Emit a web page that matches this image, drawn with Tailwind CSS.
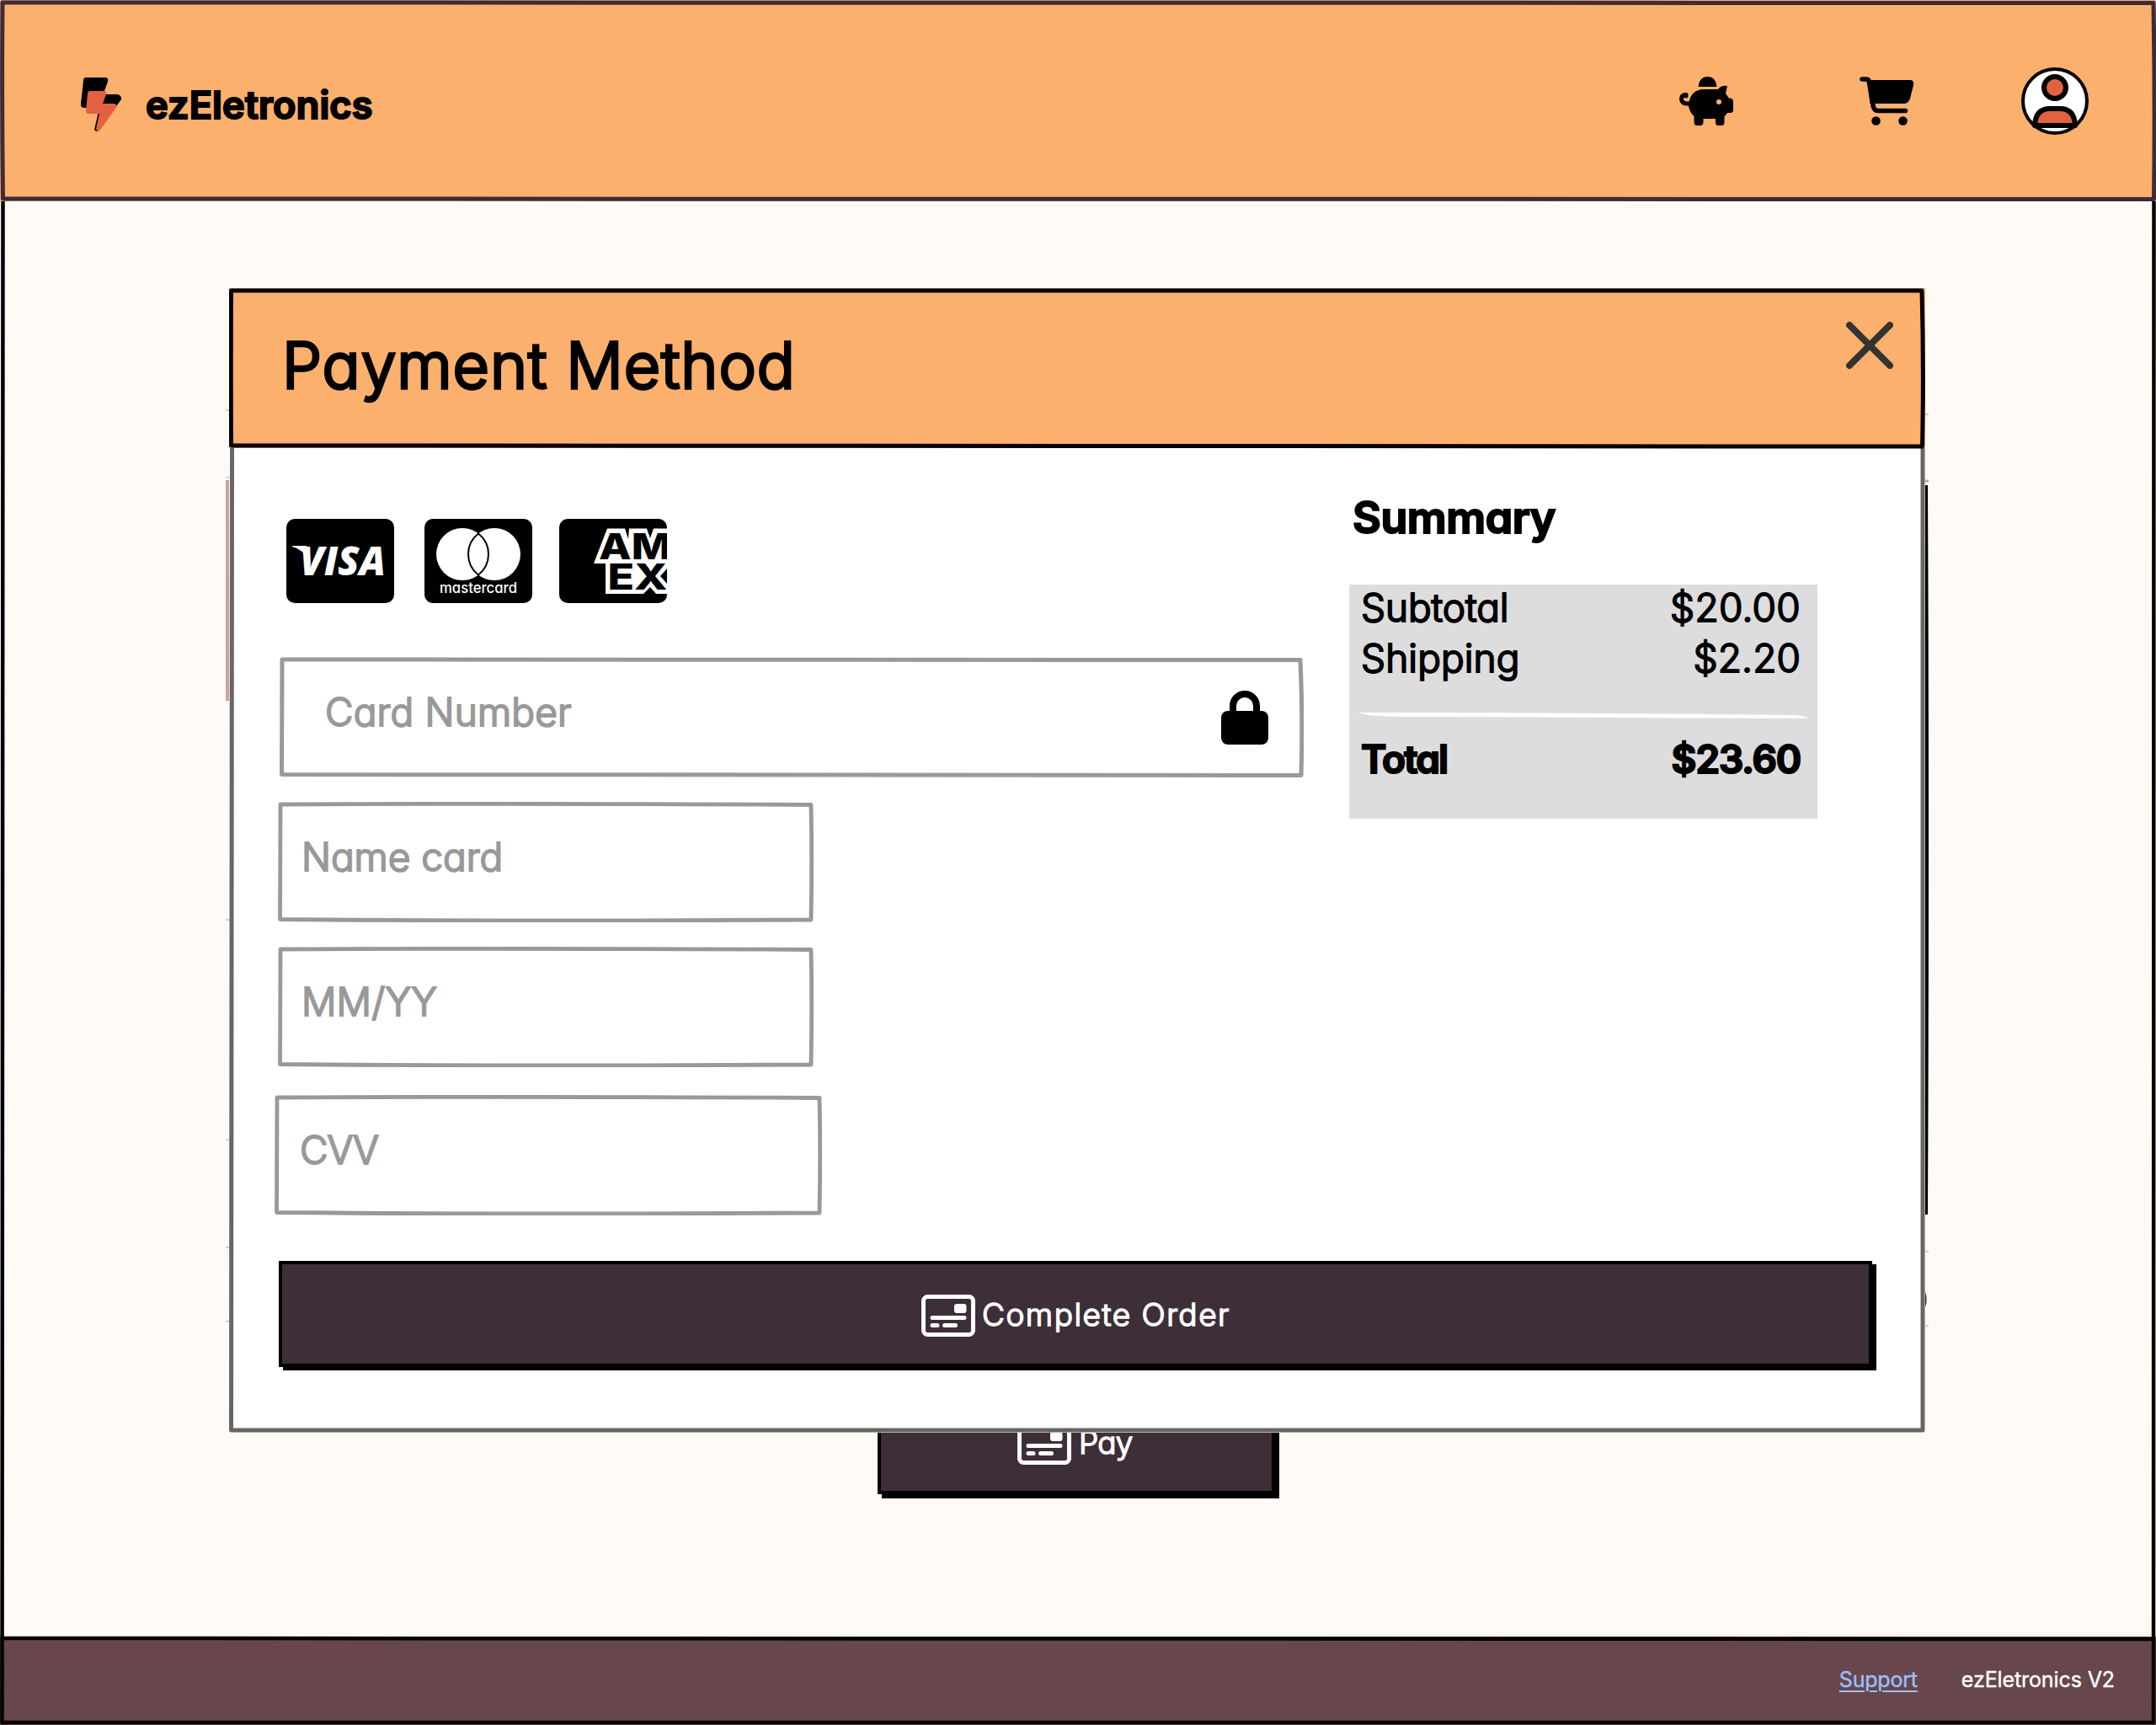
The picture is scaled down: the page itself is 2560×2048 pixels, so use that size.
<!DOCTYPE html>
<html lang="en">
<head>
<meta charset="utf-8">
<title>ezEletronics</title>
<script src="https://cdn.jsdelivr.net/npm/@tailwindcss/browser@4"></script>
</head>
<body class="w-[2560px] h-[2048px] overflow-hidden relative bg-[#fffaf5] text-black font-light font-['Inter',sans-serif] [font-feature-settings:'cv11'] [-webkit-text-stroke:2px_currentcolor] [stroke-linejoin:round]">
<svg class="hidden">
  <symbol id="card" viewBox="0 0 64 50"><rect x="2.5" y="2.5" width="59" height="45" rx="5" fill="none" stroke="#fff" stroke-width="5"/><rect x="39" y="11" width="14.500" height="11" rx="3" fill="#fff"/><path d="M13 27.500H51M13 36.500H19M27.500 36.500H40.500" stroke="#fff" stroke-width="5" stroke-linecap="round"/></symbol>
</svg>
<div class="flex h-full flex-col">
  <header class="relative flex h-[239px] shrink-0 items-center bg-[#fcb06e] pl-[96px]">
    <svg class="absolute inset-0" width="2560" height="239" fill="none" stroke="#3d2b3a" stroke-width="5"><path d="M3 3Q1300 2 2557 3.500Q2559 120 2557.500 236.500Q1300 237.500 3.500 236Q2 120 3 3Z"/></svg>
    <svg class="mt-[9px]" width="48" height="64" viewBox="0 0 48 64"><path d="M6 0H29Q33 0 32 5L28 16L26 20H44Q49 22 48 26L22 62Q19 66 16 62L22 36H4Q-.5 36 0 31L3 4Q3 0 6 0Z"/><path d="M11 16H27Q31 16 30 20L26 31H40Q44 33 42 36L23 62Q20 66 18 61L22 43H9Q6 43 6 40L8 19Q8.500 16 11 16Z" fill="#e2623f"/></svg>
    <span class="ml-[29px] mt-[10px] text-[45px] tracking-[0.2px] font-semibold leading-none [-webkit-text-stroke:2.2px_currentcolor]">ezEletronics</span>
    <div class="absolute right-[80px] top-[80px] flex items-start">
      <svg class="mt-[11px]" width="64" height="58" viewBox="0 0 64 58"><path d="M22.500 12Q24 0 33.500 0Q43 0 44.500 12Z"/><path d="M30 15H46Q50 10 57 11L55 20Q57 23 59 25.500Q64 25.500 64 29V40Q64 43 60 43H57Q55 46 53.500 47.500V54Q53.500 58 50 58H46Q43 58 43 54V50H28.500V54Q28.500 58 25 58H21Q17.500 58 17.500 54V47Q12 42 11 35Q12 15 30 15Z"/><path d="M12 32H8Q2.500 31 2.500 26.500Q2.500 21.500 8 21.500V23" fill="none" stroke="#000" stroke-width="5" stroke-linecap="round"/><circle cx="47" cy="30" r="3" fill="#fcb06e"/></svg>
      <svg class="ml-[150px] mt-[11px]" width="64" height="58" viewBox="0 0 64 58"><path d="M9 4H60Q65 4 64 10L60 26Q58 32 52 32H12.500Z"/><path d="M3 3H8Q11 3 11.500 7L16 34Q17 40.500 22 40.500H54.500" fill="none" stroke="#000" stroke-width="5.500" stroke-linecap="round"/><circle cx="19.500" cy="52.500" r="5.300"/><circle cx="51.500" cy="52.500" r="5.300"/></svg>
      <svg class="ml-[128px]" width="80" height="80" viewBox="0 0 80 80"><circle cx="40" cy="40" r="38" fill="#fff" stroke="#000" stroke-width="4"/><g fill="#e2623f" stroke="#000" stroke-width="6" stroke-linejoin="round"><circle cx="40" cy="24" r="13"/><path d="M16 69Q17 49 34 49H46Q63 49 64 69Z"/></g></svg>
    </div>
  </header>
  <main class="flex-1"></main>
  <footer class="relative flex h-[105px] shrink-0 items-center justify-end bg-[#67464c] pb-[3px] pr-[49px] text-[25px] font-normal leading-none text-white [-webkit-text-stroke:0.4px_currentcolor]">
    <a class="tracking-[-0.2px] text-[#9cc0f8] underline decoration-2 underline-offset-4">Support</a>
    <span class="ml-[52px] tracking-[-0.1px]">ezEletronics V2</span>
  </footer>
</div>
<svg class="absolute left-0 top-0 pointer-events-none" width="2560" height="2048" fill="none" stroke="#000" stroke-width="4.500"><path d="M3.500 239Q2 1100 2.500 2045Q1300 2047 2557 2045Q2558 1000 2557.500 239M3 1945Q1300 1944 2557 1946"/></svg>

<div class="absolute left-[268px] top-[570px] h-[262px] w-[5px] bg-[#cda395]"></div>
<svg class="absolute left-0 top-0" width="2560" height="1700" fill="none" stroke="#c4c4c4" stroke-width="1.500"><path d="M268 487H273M268 567H273M268 1092H273M268 1353H273M268 1481H273M268 1569H273M2286 492H2290M2286 1486H2290M2286 1574H2290"/><path d="M2286 571H2290" stroke="#cda395" stroke-width="3"/><path d="M2287 576Q2289 1000 2287 1442" stroke="#000" stroke-width="4"/><path d="M2285 1535Q2287 1543 2285 1551" stroke="#222" stroke-width="3"/></svg>

<button class="absolute left-[1042px] top-[1650px] flex h-[124px] w-[472px] items-center bg-[#3d2e38] pl-[166px] text-white shadow-[5px_5px_0_#000] border-4 border-black">
  <svg class="-ml-[4px] mt-[4px]" width="64" height="50"><use href="#card"/></svg>
  <span class="ml-[9px] text-[37px] tracking-[-0.8px] leading-none [-webkit-text-stroke:1.5px_currentcolor]">Pay</span>
</button>

<section class="absolute left-[272px] top-[342px] h-[1359px] w-[2014px] bg-white">
  <svg class="absolute inset-0" width="2014" height="1359" fill="none" stroke="#666" stroke-width="5"><path d="M3.500 188Q3 800 2.500 1356Q1000 1358 2011 1356Q2012 700 2011 188"/></svg>
  <header class="relative flex h-[190px] items-start bg-[#fcb06e]">
    <svg class="absolute inset-0" width="2014" height="191" fill="none" stroke="#000" stroke-width="5" stroke-linejoin="round"><path d="M2.500 3Q1000 2 2010 3Q2012.500 95 2010.500 188Q1000 189.500 2.500 187Q2 90 2.500 3Z"/></svg>
    <h1 class="ml-[63px] mt-[54px] text-[75px] tracking-[0.9px] leading-none [-webkit-text-stroke:3.4px_currentcolor]">Payment Method</h1>
    <svg class="absolute left-[1920px] top-[40px]" width="56" height="56" stroke="#333" stroke-width="8" stroke-linecap="round"><path d="M4 4L52 52M52 4L4 52"/></svg>
  </header>
  <div class="relative flex">
    <div class="w-[1330px] shrink-0 pl-[54px]">
      <div class="ml-[14px] mt-[84px] flex [-webkit-text-stroke:0px]">
        <svg width="128" height="100"><rect width="128" height="100" rx="10"/><text x="16" y="67" font-size="48" font-weight="800" font-style="italic" font-family="Open Sans" fill="#fff" textLength="102" lengthAdjust="spacingAndGlyphs">VISA</text><path d="M7 32H24L27 50Q20 36 7 33Z" fill="#fff"/></svg>
        <svg class="ml-[36px]" width="128" height="100"><rect width="128" height="100" rx="10"/><circle cx="45" cy="42" r="31" fill="#fff"/><circle cx="83" cy="42" r="31" fill="#fff"/><path d="M64 17.500A31 31 0 0 1 64 66.500A31 31 0 0 1 64 17.500Z" fill="#fff" stroke="#000" stroke-width="2"/><text x="18" y="88" font-size="17" font-weight="500" fill="#fff" textLength="92" lengthAdjust="spacingAndGlyphs">mastercard</text></svg>
        <svg class="ml-[32px]" width="128" height="100" viewBox="0 0 128 100" font-family="Inter" font-size="43" font-weight="800"><rect width="128" height="100" rx="10"/><path d="M41 53L57 11.500H78L82 24L83 11.500H104L108 23L112 11.500H128V89H115L108 81L100 89H55V53Z" fill="#fff"/><text x="47" y="47.700" textLength="86" lengthAdjust="spacingAndGlyphs">AM</text><text x="57.500" y="84" textLength="71" lengthAdjust="spacingAndGlyphs">EX</text><path d="M128 59L120 68L128 77Z"/></svg>
      </div>
      <div class="relative ml-[6px] mt-[64px] flex h-[143px] w-[1216px] text-[#999]">
        <svg class="absolute inset-0" width="1216" height="143" fill="none" stroke="#999" stroke-width="5" stroke-linejoin="round"><path d="M3 3Q600 1.500 1212 3.500Q1215 70 1213 140.500Q600 142 2.500 139.500Q2.500 70 3 3Z"/></svg>
        <span class="ml-[54px] mt-[42px] text-[46px] tracking-[0.2px] leading-none">Card Number</span>
        <svg class="absolute left-[1118px] top-[40px]" width="56" height="64"><path d="M14 28V18A14 14 0 0 1 42 18V28" fill="none" stroke="#000" stroke-width="8"/><rect y="24" width="56" height="40" rx="8"/></svg>
      </div>
      <div class="relative ml-[4px] mt-[29px] flex h-[143px] w-[636px] text-[#999]">
        <svg class="absolute inset-0" width="636" height="143" fill="none" stroke="#999" stroke-width="4.800" stroke-linejoin="round"><path d="M3 3Q250 1.500 633 3.500Q634.500 70 633 140Q300 142 2.500 139.500Q2.500 70 3 3Z"/></svg>
        <span class="ml-[28px] mt-[42px] text-[46px] tracking-[0px] leading-none">Name card</span>
      </div>
      <div class="relative ml-[4px] mt-[29px] flex h-[143px] w-[636px] text-[#999]">
        <svg class="absolute inset-0" width="636" height="143" fill="none" stroke="#999" stroke-width="4.800" stroke-linejoin="round"><path d="M3 3Q250 1.500 633 3.500Q634.500 70 633 140Q300 142 2.500 139.500Q2.500 70 3 3Z"/></svg>
        <span class="ml-[28px] mt-[42px] text-[46px] tracking-[0.2px] leading-none">MM/YY</span>
      </div>
      <div class="relative mt-[33px] flex h-[143px] w-[650px] text-[#999]">
        <svg class="absolute inset-0" width="650" height="143" fill="none" stroke="#999" stroke-width="4.800" stroke-linejoin="round"><path d="M3 3Q250 1.500 647 3.500Q648.500 70 647 140Q300 142 2.500 139.500Q2.500 70 3 3Z"/></svg>
        <span class="ml-[30px] mt-[42px] text-[46px] tracking-[-1.1px] leading-none">CVV</span>
      </div>
    </div>
    <div class="flex flex-col">
      <h2 class="ml-[4px] mt-[57px] text-[52px] font-semibold tracking-[-0.4px] leading-none [-webkit-text-stroke:2.2px_currentcolor]">Summary</h2>
      <div class="mt-[53px] h-[278px] w-[556px] bg-[#ddd] pl-[14px] pr-[20px] text-[46px] leading-[60px]">
        <div class="-mt-[3px] flex justify-between"><span class="tracking-[-0.1px]">Subtotal</span><span class="tracking-[0.3px]">$20.00</span></div>
        <div class="flex justify-between"><span class="tracking-[0.1px]">Shipping</span><span class="tracking-[0.1px]">$2.20</span></div>
        <svg class="mt-[3px] -ml-[3px] h-[60px]" width="534" height="60" viewBox="0 0 534 60" fill="#fff"><path d="M0 32Q260 32 520 35Q532 36 534 39Q300 38 100 37Q10 38 0 32Z"/></svg>
        <div class="-mt-[3px] flex justify-between font-semibold [-webkit-text-stroke:2.2px_currentcolor]"><span class="tracking-[-1.8px]">Total</span><span class="tracking-[-1.1px]">$23.60</span></div>
      </div>
    </div>
  </div>
  <button class="absolute left-[59px] top-[1155px] flex h-[126px] w-[1892px] items-center border-4 border-black bg-[#3d2e38] pl-[759px] text-white shadow-[5px_4px_0_#000]">
    <svg class="mt-[3px]" width="64" height="50"><use href="#card"/></svg>
    <span class="ml-[8px] text-[37px] tracking-[1.5px] leading-none [-webkit-text-stroke:1.5px_currentcolor]">Complete Order</span>
  </button>
</section>
</body>
</html>
